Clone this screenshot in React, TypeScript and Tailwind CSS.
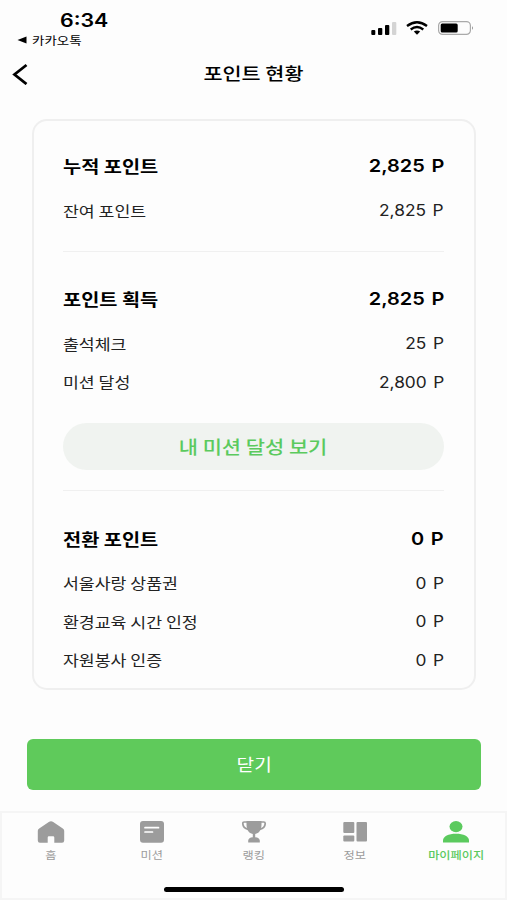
import type { ReactNode } from "react";
import clsx from "clsx";

type Row = { label: string; value: string };

const earned: Row[] = [
  { label: "출석체크", value: "25 P" },
  { label: "미션 달성", value: "2,800 P" },
];

const converted: Row[] = [
  { label: "서울사랑 상품권", value: "0 P" },
  { label: "환경교육 시간 인정", value: "0 P" },
  { label: "자원봉사 인증", value: "0 P" },
];

function HeadingRow({ label, value }: Row) {
  return (
    <div className="flex h-[51px] items-center justify-between whitespace-nowrap text-black">
      <span className="origin-left scale-x-[1.16] text-[17px] font-bold">{label}</span>
      <span className="origin-right scale-x-[1.14] pt-px font-['Inter'] text-[17.5px] font-semibold [word-spacing:1.5px]">{value}</span>
    </div>
  );
}

function PointRow({ label, value }: Row) {
  return (
    <div className="flex h-[38.5px] items-center justify-between whitespace-nowrap text-[#222]">
      <span className="origin-left scale-x-[1.15] text-[15px]">{label}</span>
      <span className="origin-right scale-x-[1.14] pt-[2px] font-['Inter'] text-[15.2px] [word-spacing:1.5px]">{value}</span>
    </div>
  );
}

function StatusBar() {
  return (
    <header className="flex h-[50px] justify-between">
      <div className="pl-[17px] pt-[8px]">
        <div className="ml-[43px] h-6 origin-left scale-x-[1.17] font-['Inter'] text-[18.3px] leading-6 font-semibold">6:34</div>
        <div className="flex h-4 items-center gap-[5px]">
          <svg width="10" height="8" viewBox="0 0 10 8">
            <path d="M0.5 4L9.5 0.5V7.5Z" />
          </svg>
          <span className="origin-left scale-x-[1.17] text-[11.5px] leading-4">카카오톡</span>
        </div>
      </div>
      <div className="mt-[21px] flex h-[14px] items-center pr-[33.5px]">
        <svg width="26" height="14" viewBox="0 0 26 14">
          <rect x="0.3" y="9" width="4" height="5" rx="1" />
          <rect x="7" y="7" width="4.3" height="7" rx="1" />
          <rect x="14" y="4" width="4.3" height="10" rx="1" />
          <rect x="21" y="1" width="4.3" height="13" rx="1" fill="#d4d4d4" />
        </svg>
        <svg className="ml-[9px]" width="22" height="14" viewBox="0 0 22 14" fill="none" stroke="#000" strokeWidth="2.3">
          <path d="M1 5Q11 -2.6 21 5" />
          <path d="M4.7 8.5Q11 3.4 17.3 8.5" />
          <path d="M7.8 10.6Q11 8.4 14.2 10.6L11 13.7Z" fill="#000" stroke="none" />
        </svg>
        <svg className="ml-[10px]" width="36" height="14" viewBox="0 0 36 14">
          <rect x="0.6" y="0.6" width="31.8" height="12.8" rx="4" fill="none" stroke="#aaa" strokeWidth="1.2" />
          <rect x="2.7" y="2.6" width="17" height="8.8" rx="1.5" />
          <path d="M34 5Q35.7 7 34 9Z" fill="#777" />
        </svg>
      </div>
    </header>
  );
}

function Tab({ label, active, children }: { label: string; active?: boolean; children: ReactNode }) {
  return (
    <button className={clsx("flex flex-1 flex-col items-center", active ? "text-[#5bca5e]" : "text-[#9c9c9c]")}>
      <svg width="28" height="24" viewBox="0 0 28 24" fill="currentColor">
        {children}
      </svg>
      <span className={clsx("mt-[3px] scale-x-[1.16] text-[10.5px] leading-4 whitespace-nowrap", active && "font-medium")}>{label}</span>
    </button>
  );
}

function TabBar() {
  return (
    <nav className="mt-[21px] h-[89px] border-2 border-[#f5f5f5] bg-[#fdfdfd]">
      <div className="-mx-[2px] flex pt-[7px]">
        <Tab label="홈">
          <path d="M0.8 10.8Q0.8 9.3 2.2 8.4L11.8 1.9Q14 0.5 16.2 1.9L25.8 8.4Q27.2 9.3 27.2 10.8V20.5Q27.2 22.7 25 22.7H17.3V17.4Q17.3 16.2 16.1 16.2H11.9Q10.7 16.2 10.7 17.4V22.7H3Q0.8 22.7 0.8 20.5Z" />
        </Tab>
        <Tab label="미션">
          <rect x="2" y="1" width="24" height="21.7" rx="3" />
          <path d="M7 7.7H20.5M7 12H14.5" stroke="#fff" strokeWidth="1.7" strokeLinecap="round" />
        </Tab>
        <Tab label="랭킹">
          <path d="M6.5 1H21.5V4.5C21.5 10 19 13.3 15.2 14V17.3C18 17.5 19.6 18.6 19.8 20.4V22.4H8.2V20.4C8.4 18.6 10 17.5 12.8 17.3V14C9 13.3 6.5 10 6.5 4.5Z" />
          <path d="M7.5 2H4.2Q2.8 2 2.8 3.6Q3 8.2 8.2 9.3M20.5 2H23.8Q25.2 2 25.2 3.6Q25 8.2 19.8 9.3" fill="none" stroke="currentColor" strokeWidth="1.7" />
        </Tab>
        <Tab label="정보">
          <rect x="2.3" y="2" width="11" height="11" rx="1" />
          <rect x="2.3" y="15.5" width="11" height="6" rx="1" />
          <rect x="15.5" y="2" width="10.5" height="19.5" rx="1" />
        </Tab>
        <Tab label="마이페이지" active>
          <ellipse cx="14" cy="6.6" rx="6.5" ry="5.6" />
          <path d="M1 22.5V20.6C1 16.4 6.5 13.8 14 13.8S27 16.4 27 20.6V22.5Z" />
        </Tab>
      </div>
      <div className="mx-auto mt-[23.5px] h-[5px] w-[180px] rounded-full bg-black" />
    </nav>
  );
}

export default function App() {
  return (
    <main className="h-[900px] w-[507px] overflow-hidden bg-[#fdfdfd] font-['Noto_Sans_CJK_KR',sans-serif] text-black">
      <StatusBar />

      <div className="grid h-[48px] grid-cols-[60px_1fr_60px] items-center">
        <svg className="ml-[12px]" width="17" height="22" viewBox="0 0 17 22" fill="none" stroke="#000" strokeWidth="2.8">
          <path d="M14.5 2L2.5 11.5L14.5 21" />
        </svg>
        <h1 className="scale-x-[1.22] pb-[2px] text-center text-[17px] font-medium">포인트 현황</h1>
      </div>

      <section className="mr-[31px] ml-[31.5px] mt-[21px] h-[571px] rounded-[15px] border-2 border-[#efefef] pr-[30px] pl-[29.5px]">
        <div className="border-b border-[#f0f0f0] pt-[19.5px] pb-[20.5px]">
          <HeadingRow label="누적 포인트" value="2,825 P" />
          <PointRow label="잔여 포인트" value="2,825 P" />
        </div>

        <div className="border-b border-[#f0f0f0] pt-[22px] pb-5">
          <HeadingRow label="포인트 획득" value="2,825 P" />
          {earned.map((row) => (
            <PointRow key={row.label} {...row} />
          ))}
          <button className="mt-[21px] flex h-[47px] w-full items-center justify-center rounded-full bg-[#f0f3f0] text-[#5bca5e]">
            <span className="scale-x-[1.16] text-[18px] font-medium">내 미션 달성 보기</span>
          </button>
        </div>

        <div className="pt-[22.5px]">
          <HeadingRow label="전환 포인트" value="0 P" />
          {converted.map((row) => (
            <PointRow key={row.label} {...row} />
          ))}
        </div>
      </section>

      <button className="mx-[27px] mt-[49px] flex h-[51px] w-[454px] items-center justify-center rounded-md bg-[#5fca5b] text-white">
        <span className="scale-x-[1.16] text-[16.5px]">닫기</span>
      </button>

      <TabBar />
    </main>
  );
}
